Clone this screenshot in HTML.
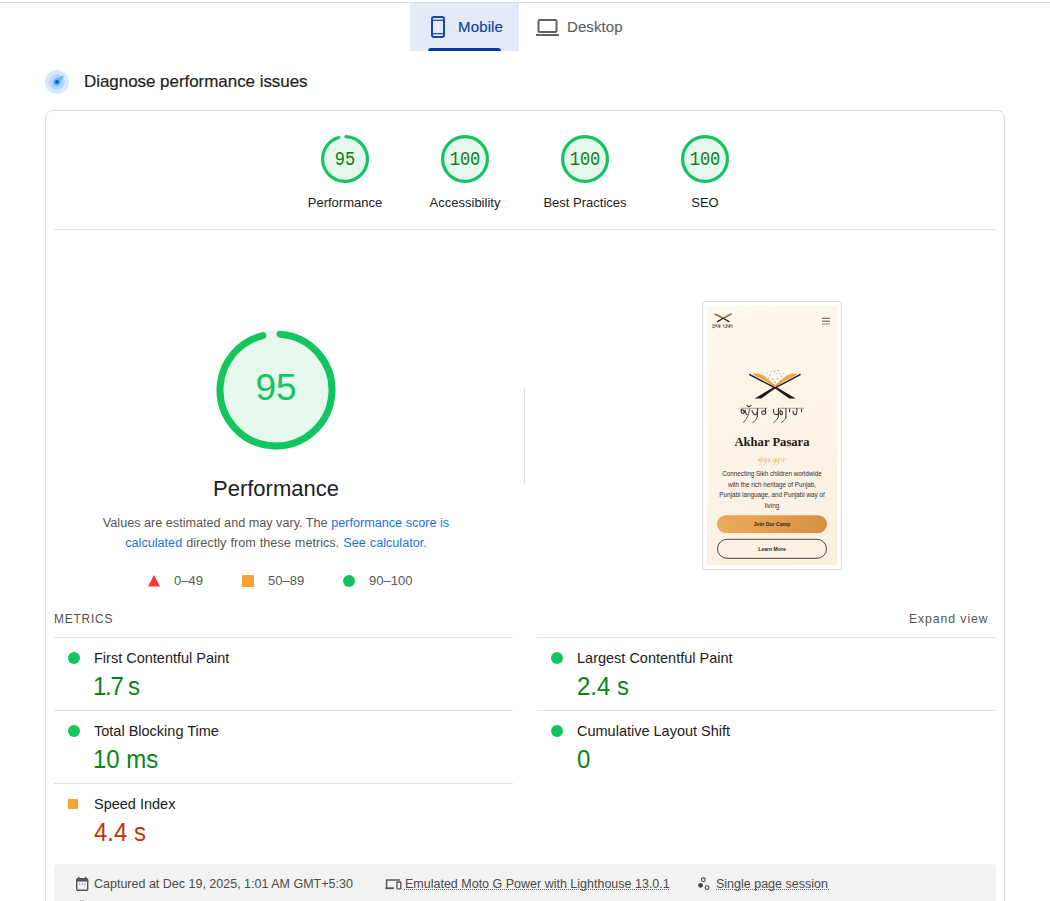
<!DOCTYPE html>
<html><head><meta charset="utf-8">
<style>
*{box-sizing:border-box;margin:0;padding:0}
html,body{width:1050px;height:901px;overflow:hidden;background:#fff}
body{position:relative;font-family:"Liberation Sans",sans-serif;color:#202124}
.abs{position:absolute}
.topline{left:0;top:2px;width:1050px;height:1px;background:#d9dadd}
.tab-active{left:410px;top:3px;width:109px;height:48px;background:#e3ebf9}
.tab-under{left:428px;top:48px;width:73px;height:3px;background:#0b3a9e;border-radius:3px 3px 0 0}
.tabtxt{font-size:15px;line-height:18px;white-space:nowrap}
.card{left:45px;top:110px;width:960px;height:900px;border:1px solid #dadce0;border-radius:8px}
.hline{height:1px;background:#e3e3e3}
.glabel{font-size:13px;line-height:16px;width:120px;text-align:center;white-space:nowrap;color:#202124}
.gnum{font-family:"Liberation Mono",monospace;font-size:17px;line-height:20px;color:#0a8012;width:48px;text-align:center;transform:scaleY(1.18);transform-origin:50% 3px}
.desc{font-size:12.65px;line-height:20px;color:#585858;text-align:center;white-space:nowrap}
.link{color:#1a73e8}
.leg{font-size:13px;line-height:16px;color:#585858;white-space:nowrap}
.mlabel{font-size:14.5px;line-height:18px;color:#202124;white-space:nowrap}
.mval{font-size:24px;line-height:28px;white-space:nowrap;transform:scaleY(1.065);transform-origin:0 5px}
.green{color:#0b841b}
.red{color:#c33300}
.dot{width:12px;height:12px;border-radius:50%;background:#13c55f}
.sq{width:10px;height:10px;background:#ffa033}
.foot{left:54px;top:864px;width:942px;height:60px;background:#f2f2f2;border-radius:4px}
.ftxt{font-size:12.5px;line-height:16px;color:#4a4a4a;white-space:nowrap}
.dotted{}
.thumb{background:linear-gradient(160deg,#fdf7ec 0%,#fcf3e5 60%,#fbefdf 100%)}
.ttitle{left:0;top:127.5px;width:130px;text-align:center;font-family:"Liberation Serif",serif;font-weight:700;font-size:12.6px;line-height:16px;color:#1e1a16;white-space:nowrap}
.tbody{left:0;width:130px;text-align:center;font-size:6.3px;line-height:10.6px;color:#35302b;white-space:nowrap}
.tbtn{left:10px;width:110px;text-align:center;font-size:5.1px;line-height:8px;font-weight:700;color:#2a2520;white-space:nowrap}
</style></head>
<body>
<div class="abs topline"></div>
<div class="abs tab-active"></div>
<div class="abs tab-under"></div>
<!-- phone icon -->
<svg class="abs" style="left:431px;top:16px" width="14" height="22" viewBox="0 0 14 22">
  <rect x="1" y="1" width="12" height="20" rx="2" fill="none" stroke="#1a47a8" stroke-width="2"/>
  <line x1="1" y1="4.3" x2="13" y2="4.3" stroke="#1a47a8" stroke-width="1.2"/>
  <line x1="1" y1="17.7" x2="13" y2="17.7" stroke="#1a47a8" stroke-width="1.2"/>
</svg>
<div class="abs tabtxt" style="left:458px;top:18px;color:#0f43a3;-webkit-text-stroke:0.2px #0f43a3;letter-spacing:0.15px">Mobile</div>
<!-- laptop icon -->
<svg class="abs" style="left:536px;top:19px" width="23" height="17" viewBox="0 0 23 17">
  <rect x="2.5" y="1" width="18" height="12" rx="1" fill="none" stroke="#5f6368" stroke-width="2"/>
  <line x1="0" y1="16" x2="23" y2="16" stroke="#5f6368" stroke-width="2"/>
</svg>
<div class="abs tabtxt" style="left:567px;top:18px;color:#5a5e62;-webkit-text-stroke:0.15px #5a5e62;letter-spacing:0.1px">Desktop</div>

<!-- diagnose icon -->
<svg class="abs" style="left:45px;top:70px" width="24" height="24" viewBox="0 0 24 24">
  <circle cx="12" cy="12" r="12" fill="#dae8fd"/>
  <circle cx="12" cy="12" r="7.9" fill="#bbd6fc"/>
  <path d="M10.24 8.79 L18.9 5.2 L15.19 13.81 A3.8 3.8 0 1 1 10.24 8.79 Z" fill="#5ac1f8"/>
  <circle cx="12" cy="12.1" r="2" fill="#0657f5"/>
</svg>
<div class="abs" style="left:84px;top:72px;font-size:17px;line-height:20px;white-space:nowrap;color:#1f1f1f;-webkit-text-stroke:0.2px #1f1f1f;letter-spacing:-0.05px">Diagnose performance issues</div>

<div class="abs card"></div>

<!-- small gauges -->
<svg class="abs" style="left:321px;top:135px" width="48" height="48" viewBox="0 0 120 120">
  <circle cx="60" cy="60" r="59.5" fill="#e6f8ee"/>
  <circle cx="60" cy="60" r="56" fill="none" stroke="#13c55f" stroke-width="8" stroke-linecap="round" stroke-dasharray="331 351.86" transform="rotate(-87.5 60 60)"/>
</svg>
<div class="abs gnum" style="left:321px;top:149px">95</div>
<svg class="abs" style="left:441px;top:135px" width="48" height="48" viewBox="0 0 120 120">
  <circle cx="60" cy="60" r="59.5" fill="#e6f8ee"/><circle cx="60" cy="60" r="56" fill="none" stroke="#13c55f" stroke-width="8"/>
</svg>
<div class="abs gnum" style="left:441px;top:149px">100</div>
<svg class="abs" style="left:561px;top:135px" width="48" height="48" viewBox="0 0 120 120">
  <circle cx="60" cy="60" r="59.5" fill="#e6f8ee"/><circle cx="60" cy="60" r="56" fill="none" stroke="#13c55f" stroke-width="8"/>
</svg>
<div class="abs gnum" style="left:561px;top:149px">100</div>
<svg class="abs" style="left:681px;top:135px" width="48" height="48" viewBox="0 0 120 120">
  <circle cx="60" cy="60" r="59.5" fill="#e6f8ee"/><circle cx="60" cy="60" r="56" fill="none" stroke="#13c55f" stroke-width="8"/>
</svg>
<div class="abs gnum" style="left:681px;top:149px">100</div>

<div class="abs glabel" style="left:285px;top:195px">Performance</div>
<div class="abs glabel" style="left:405px;top:195px">Accessibility</div>
<div class="abs glabel" style="left:525px;top:195px">Best Practices</div>
<div class="abs glabel" style="left:645px;top:195px">SEO</div>

<div class="abs hline" style="left:54px;top:229px;width:942px"></div>

<!-- big gauge -->
<svg class="abs" style="left:216px;top:330px" width="120" height="120" viewBox="0 0 120 120">
  <circle cx="60" cy="60" r="59.5" fill="#e6f8ee"/>
  <circle cx="60" cy="60" r="56" fill="none" stroke="#13c55f" stroke-width="7" stroke-linecap="round" stroke-dasharray="333.8 351.86" transform="rotate(-85.8 60 60)"/>
</svg>
<div class="abs" style="left:216px;top:367px;width:120px;text-align:center;font-size:37px;line-height:42px;color:#13c55f">95</div>
<div class="abs" style="left:176px;top:476px;width:200px;text-align:center;font-size:22px;line-height:26px;color:#202124">Performance</div>
<div class="abs desc" style="left:76px;top:513px;width:400px">Values are estimated and may vary. The <span class="link">performance score is</span></div>
<div class="abs desc" style="left:76px;top:533px;width:400px;word-spacing:0.6px"><span class="link">calculated</span> directly from these metrics. <span class="link">See calculator.</span></div>

<svg class="abs" style="left:148px;top:575px" width="12" height="12" viewBox="0 0 12 12"><path d="M6 0 L12 11.5 L0 11.5 Z" fill="#f33"/></svg>
<div class="abs leg" style="left:174px;top:573px">0–49</div>
<div class="abs" style="left:242px;top:575px;width:12px;height:12px;background:#ffa033"></div>
<div class="abs leg" style="left:268px;top:573px">50–89</div>
<div class="abs" style="left:343px;top:575px;width:12px;height:12px;border-radius:50%;background:#13c55f"></div>
<div class="abs leg" style="left:369px;top:573px">90–100</div>

<div class="abs" style="left:524px;top:388px;width:1px;height:96px;background:#e0e0e0"></div>

<!-- thumbnail -->
<div class="abs" style="left:702px;top:301px;width:140px;height:269px;border:1px solid #dadce0;border-radius:3px;background:#fff"></div>
<div class="abs thumb" style="left:707px;top:306px;width:130px;height:259px;overflow:hidden">
<svg class="abs" style="left:0;top:0" width="130" height="259" viewBox="0 0 130 259">
  <defs>
    <g id="book">
      <polygon points="45.4,67.8 50.9,67.4 56.3,69.5 68.0,78.9 67.6,81.2 58.6,75.0 48.5,69.9" fill="#eca447"/>
      <polygon points="90.8,67.8 85.3,67.4 79.9,69.5 68.2,78.9 68.6,81.2 77.6,75.0 87.7,69.9" fill="#eca447"/>
      <line x1="42.3" y1="68.4" x2="68.1" y2="81.8" stroke="#1e1a16" stroke-width="1.5"/>
      <line x1="93.6" y1="68.4" x2="68.1" y2="81.8" stroke="#1e1a16" stroke-width="1.5"/>
      <polygon points="66.4,81.2 69.8,81.2 54.2,92.6 47.6,92.6" fill="#1e1a16"/>
      <polygon points="66.4,81.2 69.8,81.2 88.8,92.6 82.2,92.6" fill="#1e1a16"/>
    </g>
  </defs>
  <use href="#book"/>
  <g fill="#6c7480" transform="translate(68 70) scale(1.1) translate(-68 -70)">
    <circle cx="58" cy="70" r=".45"/><circle cx="61" cy="67" r=".45"/><circle cx="63.5" cy="69" r=".5"/><circle cx="65" cy="66" r=".45"/>
    <circle cx="67.5" cy="65.5" r=".6"/><circle cx="69" cy="68" r=".45"/><circle cx="71" cy="65" r=".5"/><circle cx="72.5" cy="67.5" r=".45"/>
    <circle cx="74" cy="70" r=".5"/><circle cx="76" cy="68" r=".45"/><circle cx="62" cy="72" r=".45"/><circle cx="66" cy="73" r=".45"/>
    <circle cx="70" cy="72" r=".5"/><circle cx="73" cy="74" r=".45"/><circle cx="68" cy="75.5" r=".6" fill="#6a7a8a"/>
  </g>
  <g fill="none" stroke-linecap="round">
    <path d="M8.4,8.2 C11,8.6 14,10.4 16.2,12.2 C18.4,10.4 21.4,8.6 24,8" stroke="#e3a25a" stroke-width="1.5"/>
    <path d="M7.9,8.4 L16.3,12.6 L24.3,8.2" stroke="#3a3029" stroke-width="0.8"/>
    <path d="M16.3,12.2 L10.4,15.6 M16.3,12.2 L22,15.6" stroke="#2a2420" stroke-width="1.3"/>
  </g>
  <g stroke="#4a4540" stroke-width="0.65" fill="none" stroke-linecap="round">
    <path d="M5.5,18.9 C6.5,18.5 8,19 7.6,20 C7.2,20.8 6,21 5.4,21.4 C6.5,22 8.2,21.8 8.6,20.6 L8.8,18.9 M9.5,19.1 C9.6,20.6 10.2,21.5 11,21.4 C11.8,21.2 12,20 11.9,19 M12.8,19 L12.8,21.6 M13,20.3 C12,19.6 11.6,20.2 12,21 M16.5,19.2 C16,20.2 16.6,21.2 17.6,21.4 L19.4,21.4 M19.4,19 L19.4,21.7 M20.4,19.1 C21.6,19.2 21.6,20.4 20.8,21 L22.6,20.8 M22.6,19 L22.6,21.8 M23.6,19 L23.6,20 M25,19 L25,21.7"/>
    <path d="M5,18.9 L13.2,18.9 M15.8,18.9 L25.4,18.9" stroke="#7a756f" stroke-width="0.45"/>
  </g>
  <g stroke="#67625c" stroke-width="1.1">
    <line x1="115" y1="12.3" x2="123" y2="12.3"/><line x1="115" y1="15.2" x2="123" y2="15.2"/><line x1="115" y1="18" x2="123" y2="18" stroke="#9a958e"/>
  </g>
  <svg x="31" y="96" width="68" height="24" viewBox="0 0 1050 371" style="color:#3d3833">
    <g id="gur" stroke="currentColor" stroke-width="17" fill="none" stroke-linecap="round" stroke-linejoin="round">
      <path d="M45,97 L445,97 M625,97 L1010,97" stroke-opacity="0.6" stroke-width="12"/>
      <path d="M52,112 C42,150 50,178 80,176 C102,172 106,145 110,125 C114,165 124,192 142,196 M62,128 C78,116 98,126 86,148"/>
      <path d="M140,52 C150,72 165,84 202,52"/>
      <path d="M175,112 C172,195 140,255 85,315" stroke-width="13"/>
      <path d="M215,135 C232,178 255,205 282,192 C296,182 300,160 300,100 L300,225"/>
      <path d="M300,220 C295,262 262,292 228,315" stroke-width="13"/>
      <path d="M425,100 L425,182 M425,142 C392,130 356,148 366,172 C376,196 406,200 425,184"/>
      <path d="M552,112 C540,160 556,196 586,196 C610,194 620,182 625,170 M625,100 L625,222"/>
      <path d="M625,220 C620,262 582,292 552,315" stroke-width="13"/>
      <path d="M655,128 C640,158 650,198 672,196 C692,192 694,152 668,138 M740,100 L740,238"/>
      <path d="M740,236 C735,270 702,296 672,315" stroke-width="13"/>
      <path d="M797,112 L797,150"/>
      <path d="M852,140 C842,176 872,202 896,192 C908,186 912,168 910,100"/>
      <path d="M982,112 L982,150"/>
    </g>
  </svg>
  <svg x="50" y="150" width="30.6" height="10.8" viewBox="0 0 1050 371" style="color:#e4a352"><use href="#gur" stroke-width="26"/></svg>
  
  <defs>
    <linearGradient id="btn" x1="0" x2="1" y1="0" y2="0"><stop offset="0" stop-color="#eeab5a"/><stop offset="1" stop-color="#d5913e"/></linearGradient>
  </defs>
  <rect x="10" y="209.2" width="110" height="17.8" rx="8.9" fill="url(#btn)"/>
  <rect x="10.5" y="233.3" width="109" height="19" rx="9.5" fill="none" stroke="#4a4540" stroke-width="1"/>
</svg>
<div class="abs ttitle">Akhar Pasara</div>
<div class="abs tbody" style="top:163px">Connecting Sikh children worldwide<br>with the rich heritage of Punjab,<br>Punjabi language, and Punjabi way of<br>living</div>
<div class="abs tbtn" style="top:214px">Join Our Camp</div>
<div class="abs tbtn" style="top:239px">Learn More</div>
</div>

<!-- metrics -->
<div class="abs" style="left:54px;top:611px;font-size:11.9px;line-height:16px;letter-spacing:0.8px;color:#4e4e4e">METRICS</div>
<div class="abs" style="left:909px;top:611px;font-size:12.2px;line-height:16px;letter-spacing:0.95px;color:#555">Expand view</div>

<div class="abs hline" style="left:54px;top:637px;width:459px"></div>
<div class="abs hline" style="left:537px;top:637px;width:459px"></div>
<div class="abs hline" style="left:54px;top:710px;width:459px"></div>
<div class="abs hline" style="left:537px;top:710px;width:459px"></div>
<div class="abs hline" style="left:54px;top:783px;width:459px"></div>

<div class="abs dot" style="left:68px;top:652px"></div>
<div class="abs mlabel" style="left:94px;top:649px">First Contentful Paint</div>
<div class="abs mval green" style="left:93px;top:672px;letter-spacing:-1.25px">1.7 s</div>

<div class="abs dot" style="left:551px;top:652px"></div>
<div class="abs mlabel" style="left:577px;top:649px">Largest Contentful Paint</div>
<div class="abs mval green" style="left:577px;top:672px">2.4 s</div>

<div class="abs dot" style="left:68px;top:725px"></div>
<div class="abs mlabel" style="left:94px;top:722px">Total Blocking Time</div>
<div class="abs mval green" style="left:93px;top:745px">10 ms</div>

<div class="abs dot" style="left:551px;top:725px"></div>
<div class="abs mlabel" style="left:577px;top:722px">Cumulative Layout Shift</div>
<div class="abs mval green" style="left:577px;top:745px">0</div>

<div class="abs sq" style="left:68px;top:799px"></div>
<div class="abs mlabel" style="left:94px;top:795px">Speed Index</div>
<div class="abs mval red" style="left:94px;top:818px">4.4 s</div>

<!-- footer -->
<div class="abs foot"></div>
<svg class="abs" style="left:76px;top:876px" width="13" height="16" viewBox="0 0 13 16">
  <g fill="none" stroke="#555" stroke-width="1.4">
    <rect x="0.7" y="2.7" width="11" height="11.6" rx="1.2"/>
  </g>
  <rect x="0.7" y="3" width="11" height="2.6" fill="#555"/>
  <rect x="2" y="0.8" width="1.4" height="3" fill="#555"/><rect x="9" y="0.8" width="1.4" height="3" fill="#555"/>
  <rect x="3" y="7.3" width="1" height="1.3" fill="#777"/><rect x="5.7" y="7.3" width="1" height="1.3" fill="#777"/><rect x="8.4" y="7.3" width="1" height="1.3" fill="#777"/>
</svg>
<svg class="abs" style="left:385px;top:878px" width="17" height="12" viewBox="0 0 17 12">
  <path d="M1.6 9.8 V2 H14.8" fill="none" stroke="#555" stroke-width="1.5"/>
  <rect x="0.3" y="9.3" width="8.6" height="1.8" fill="#555"/>
  <rect x="11.9" y="4" width="3.9" height="6.9" rx="0.6" fill="none" stroke="#555" stroke-width="1.3"/>
</svg>
<svg class="abs" style="left:697px;top:876px" width="14" height="15" viewBox="0 0 14 15">
  <circle cx="6.3" cy="3.8" r="1.9" fill="none" stroke="#444" stroke-width="1.1"/>
  <circle cx="3.6" cy="9.3" r="2.4" fill="#444"/>
  <circle cx="10.1" cy="11.6" r="1.9" fill="none" stroke="#444" stroke-width="1.1"/>
</svg>
<div class="abs" style="left:80px;top:900px;width:4px;height:1px;background:#bbb"></div>
<div class="abs" style="left:404px;top:889px;width:265px;height:1px;background:repeating-linear-gradient(90deg,#666 0 1px,transparent 1px 2px)"></div>
<div class="abs" style="left:716px;top:889px;width:113px;height:1px;background:repeating-linear-gradient(90deg,#666 0 1px,transparent 1px 2px)"></div>
<div class="abs ftxt" style="left:94px;top:876px">Captured at Dec 19, 2025, 1:01 AM GMT+5:30</div>
<div class="abs ftxt" style="left:405px;top:876px"><span class="dotted">Emulated Moto G Power with Lighthouse 13.0.1</span></div>
<div class="abs ftxt" style="left:716px;top:876px"><span class="dotted">Single page session</span></div>

</body></html>
